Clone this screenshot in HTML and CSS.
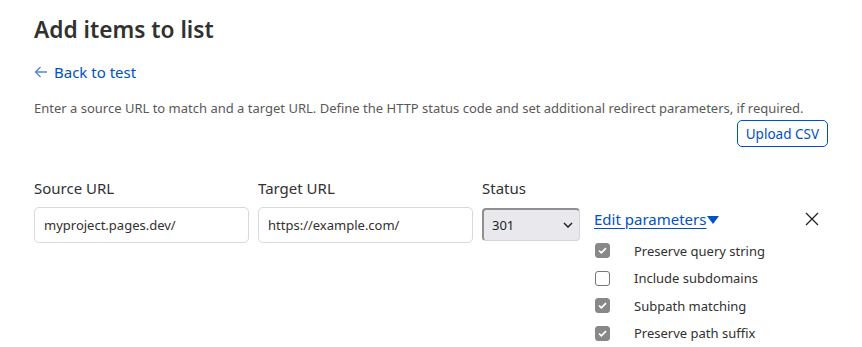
FILE: index.html
```html
<!DOCTYPE html>
<html lang="en">
<head>
    <meta charset="UTF-8">
    <meta name="viewport" content="width=device-width, initial-scale=1.0">
    <title>Add items to list</title>
    <link rel="stylesheet" href="styles.css">
</head>
<body>

    <div class="page">
        <h1 class="title">Add items to list</h1>

        <a class="back-link" href="#">
            <svg class="back-arrow" width="14" height="14" viewBox="0 0 14 14" aria-hidden="true">
                <path d="M13 7H1.5M6.5 2L1.5 7l5 5" fill="none" stroke="currentColor" stroke-width="1.3"/>
            </svg>
            Back to test
        </a>

        <p class="intro">Enter a source URL to match and a target URL. Define the HTTP status code and set additional redirect parameters, if required.</p>

        <div class="actions">
            <button class="btn-outline" type="button">Upload CSV</button>
        </div>

        <!-- Riga di inserimento -->
        <div class="item-row">
            <div class="field">
                <label class="field-label">Source URL</label>
                <input class="text-input" type="text" value="myproject.pages.dev/">
            </div>
            <div class="field">
                <label class="field-label">Target URL</label>
                <input class="text-input" type="text" value="https://example.com/">
            </div>
            <div class="field">
                <label class="field-label">Status</label>
                <div class="select">
                    <span>301</span>
                    <svg width="10" height="6" viewBox="0 0 10 6" aria-hidden="true">
                        <path d="M1 1l4 4 4-4" fill="none" stroke="#222" stroke-width="1.5"/>
                    </svg>
                </div>
            </div>

            <div class="params">
                <div class="params-head">
                    <a class="params-toggle" href="#"><span class="params-link">Edit parameters</span><span class="caret"></span></a>
                    <button class="close-btn" type="button" aria-label="Remove">
                        <svg width="14" height="14" viewBox="0 0 14 14" aria-hidden="true">
                            <path d="M1 1l12 12M13 1L1 13" stroke="#222" stroke-width="1.3"/>
                        </svg>
                    </button>
                </div>
                <ul class="checks">
                    <li><span class="box checked"></span>Preserve query string</li>
                    <li><span class="box"></span>Include subdomains</li>
                    <li><span class="box checked"></span>Subpath matching</li>
                    <li><span class="box checked"></span>Preserve path suffix</li>
                </ul>
            </div>
        </div>
    </div>

</body>
</html>
```

FILE: styles.css
```css
* {
    margin: 0;
    padding: 0;
    box-sizing: border-box;
}

body {
    background: #ffffff;
    font-family: "Noto Sans", "Open Sans", sans-serif;
    color: #313131;
}

.page {
    padding: 14px 34px 0;
}

/* Titolo */
.title {
    font-size: 22.7px;
    font-weight: 600;
    line-height: 32px;
    color: #313131;
}

.back-link {
    display: inline-flex;
    align-items: center;
    gap: 6px;
    margin-top: 16px;
    font-size: 15px;
    line-height: 20px;
    color: #0051c3;
    text-decoration: none;
}

.back-arrow {
    color: #4f86d6;
}

.intro {
    margin-top: 15px;
    font-size: 13px;
    line-height: 18px;
    color: #595959;
    white-space: nowrap;
}

.actions {
    display: flex;
    justify-content: flex-end;
    margin-top: 3px;
}

.btn-outline {
    height: 27px;
    padding: 0 8px;
    border: 1px solid #0051c3;
    border-radius: 5px;
    background: #fff;
    color: #0051c3;
    font-family: inherit;
    font-size: 13.5px;
}

/* Riga */
.item-row {
    display: flex;
    align-items: flex-start;
    margin-top: 30px;
}

.field {
    display: flex;
    flex-direction: column;
    margin-right: 9px;
}

.field:nth-child(1),
.field:nth-child(2) {
    width: 215px;
}

.field:nth-child(3) {
    width: 98px;
    margin-right: 14px;
}

.field-label {
    font-size: 15px;
    line-height: 22px;
    color: #313131;
    margin-bottom: 8px;
}

.text-input {
    height: 36px;
    padding: 0 9px;
    border: 1px solid #d9d9d9;
    border-radius: 5px;
    font-family: inherit;
    font-size: 13px;
    color: #313131;
    outline: none;
}

.select {
    display: flex;
    align-items: center;
    justify-content: space-between;
    height: 33px;
    margin-top: 1px;
    padding: 0 6px 0 8px;
    background: #e9e9ed;
    border: 1px solid #d5d5d8;
    border-top: 2px solid #8f8f8f;
    border-left: 2px solid #8f8f8f;
    border-radius: 4px;
    font-size: 13px;
    color: #222;
}

/* Parametri */
.params {
    flex: 1;
    padding-top: 32px;
}

.params-head {
    display: flex;
    align-items: center;
    justify-content: space-between;
    padding-right: 9px;
}

.params-toggle {
    display: inline-flex;
    align-items: center;
    color: #0051c3;
    text-decoration: none;
    font-size: 15px;
    line-height: 20px;
}

.params-link {
    text-decoration: underline;
    text-underline-offset: 3px;
}

.caret {
    width: 0;
    height: 0;
    margin-left: 1px;
    margin-top: 2px;
    border-left: 6.5px solid transparent;
    border-right: 6.5px solid transparent;
    border-top: 8px solid #0051c3;
}

.close-btn {
    background: none;
    border: 0;
    display: flex;
}

.checks {
    list-style: none;
    margin-top: 8px;
}

.checks li {
    display: flex;
    align-items: center;
    height: 27.5px;
    font-size: 13px;
    color: #313131;
}

.box {
    width: 15px;
    height: 15px;
    margin: 0 24px 0 1px;
    border: 1px solid #767676;
    border-radius: 3px;
    background: #fff;
}

.box.checked {
    border-color: #888;
    background: #888 url("data:image/svg+xml;utf8,<svg xmlns='http://www.w3.org/2000/svg' viewBox='0 0 15 15'><path d='M3.5 7.5l2.7 2.7 5.3-5.5' fill='none' stroke='white' stroke-width='2'/></svg>") center / 13px no-repeat;
}
```
